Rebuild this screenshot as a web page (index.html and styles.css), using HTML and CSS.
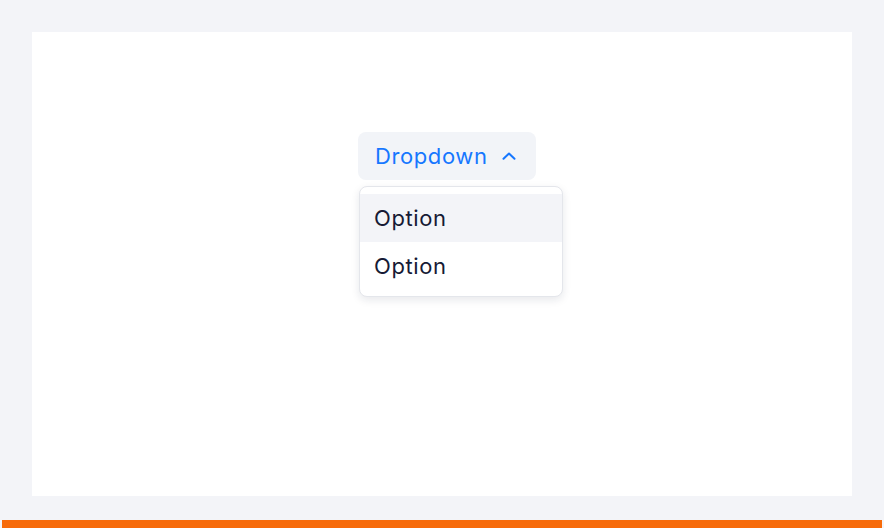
FILE: index.html
```html
<!DOCTYPE html>
<html>
<head>
<meta charset="utf-8">
<link rel="stylesheet" href="styles.css">
</head>
<body>
<div class="page">
  <div class="card">
    <div class="dropdown">
      <button class="trigger">
        <span>Dropdown</span>
        <svg class="chev" width="14" height="8" viewBox="0 0 14 8"><path d="M1.5 6.8 L7 1.5 L12.5 6.8" fill="none" stroke="currentColor" stroke-width="2" stroke-linecap="round" stroke-linejoin="round"/></svg>
      </button>
      <div class="menu">
        <div class="item active">Option</div>
        <div class="item">Option</div>
      </div>
    </div>
  </div>
</div>
<div class="bar"></div>
</body>
</html>
```
FILE: styles.css
```css
html, body {
  margin: 0;
  padding: 0;
  background: #f3f4f8;
  font-family: Inter, "Noto Sans", sans-serif;
}
.page {
  padding: 32px 32px 24px;
}
.card {
  background: #ffffff;
  height: 464px;
  box-sizing: border-box;
  padding: 100px 0 0 326px;
}
.dropdown {
  position: relative;
  display: inline-block;
}
.trigger {
  display: flex;
  align-items: center;
  gap: 14px;
  height: 48px;
  padding: 0 0 0 17px;
  width: 178px;
  box-sizing: border-box;
  border: none;
  border-radius: 8px;
  background: #f2f4f8;
  color: #1677ff;
  font-family: inherit;
  font-size: 22px;
  letter-spacing: 0.6px;
  cursor: pointer;
}
.chev {
  display: block;
}
.menu {
  position: absolute;
  top: 54px;
  left: 1px;
  width: 204px;
  box-sizing: border-box;
  padding: 7px 0 6px;
  background: #fff;
  border: 1px solid #e4e6eb;
  border-radius: 8px;
  box-shadow: 0 3px 8px rgba(20, 30, 60, 0.10);
}
.item {
  height: 48px;
  line-height: 48px;
  padding-left: 14px;
  font-size: 22px;
  letter-spacing: 0.6px;
  color: #161a35;
}
.item.active {
  background: #f3f4f8;
}
.bar {
  height: 8px;
  margin: 0 2px;
  background: #f76b0a;
}
```
